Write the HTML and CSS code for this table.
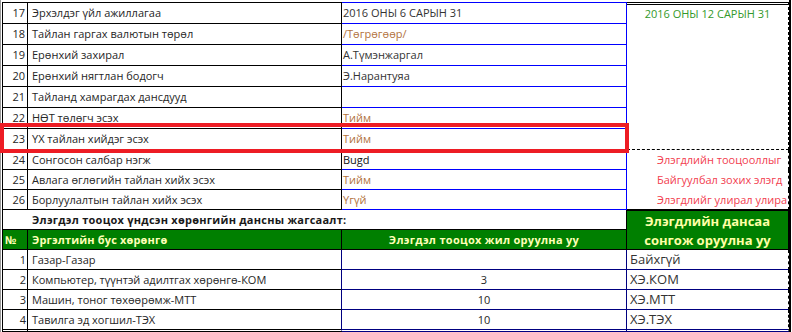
FILE: index.html
```html
<!DOCTYPE html>
<html lang="mn">
<head>
<meta charset="utf-8">
<title>Sheet</title>
<link rel="stylesheet" href="styles.css">
</head>
<body>
<div class="sheet">
  <div class="upper">
    <div class="merged">2016 ОНЫ 12 САРЫН 31</div>

    <div class="c num first">17</div>
    <div class="c lbl first">Эрхэлдэг үйл ажиллагаа</div>
    <div class="c val first">2016 ОНЫ 6 САРЫН 31</div>

    <div class="c num">18</div>
    <div class="c lbl">Тайлан гаргах валютын төрөл</div>
    <div class="c val brown">/Төгрөгөөр/</div>

    <div class="c num">19</div>
    <div class="c lbl">Ерөнхий захирал</div>
    <div class="c val">А.Түмэнжаргал</div>

    <div class="c num">20</div>
    <div class="c lbl">Ерөнхий нягтлан бодогч</div>
    <div class="c val">Э.Нарантуяа</div>

    <div class="c num">21</div>
    <div class="c lbl">Тайланд хамрагдах дансдууд</div>
    <div class="c val"></div>

    <div class="c num">22</div>
    <div class="c lbl">НӨТ төлөгч эсэх</div>
    <div class="c val brown">Тийм</div>

    <div class="c num">23</div>
    <div class="c lbl">ҮХ тайлан хийдэг эсэх</div>
    <div class="c val brown">Тийм</div>

    <div class="c num s">24</div>
    <div class="c lbl s">Сонгосон салбар нэгж</div>
    <div class="c val s black">Bugd</div>
    <div class="c note s">Элэгдлийн тооцооллыг</div>

    <div class="c num s">25</div>
    <div class="c lbl s">Авлага өглөгийн тайлан хийх эсэх</div>
    <div class="c val s brown">Тийм</div>
    <div class="c note s">Байгуулбал зохих элэгд</div>

    <div class="c num s">26</div>
    <div class="c lbl s">Борлуулалтын тайлан хийх эсэх</div>
    <div class="c val s brown">Үгүй</div>
    <div class="c note s last">Элэгдлийг улирал улира</div>
  </div>

  <div class="lower">
    <div class="title">Элэгдэл тооцох үндсэн хөрөнгийн дансны жагсаалт:</div>
    <div class="rhead">Элэгдлийн дансаа<br>сонгож оруулна уу</div>

    <div class="h hnum">№</div>
    <div class="h hlbl">Эргэлтийн бус хөрөнгө</div>
    <div class="h hyr">Элэгдэл тооцох жил оруулна уу</div>

    <div class="d dnum">1</div>
    <div class="d dlbl">Газар-Газар</div>
    <div class="d dyr"></div>
    <div class="d dacc">Байхгүй</div>

    <div class="d dnum">2</div>
    <div class="d dlbl">Компьютер, түүнтэй адилтгах хөрөнгө-КОМ</div>
    <div class="d dyr">3</div>
    <div class="d dacc">ХЭ.КОМ</div>

    <div class="d dnum">3</div>
    <div class="d dlbl">Машин, тоног төхөөрөмж-МТТ</div>
    <div class="d dyr">10</div>
    <div class="d dacc">ХЭ.МТТ</div>

    <div class="d dnum end">4</div>
    <div class="d dlbl end">Тавилга эд хогшил-ТЭХ</div>
    <div class="d dyr end">10</div>
    <div class="d dacc end">ХЭ.ТЭХ</div>
  </div>

  <div class="highlight"></div>
</div>
</body>
</html>
```

FILE: styles.css
```css
* { box-sizing: border-box; }

html, body {
  margin: 0;
  padding: 0;
  background: #fff;
}

body {
  font-family: "Open Sans", "Noto Sans", sans-serif;
  font-size: 11px;
  color: #262626;
}

.sheet {
  position: relative;
  width: 791px;
  height: 332px;
  padding: 2px 0 0 1px;
  border-left: 1px solid #9a9a9a;
  border-right: 2px solid #000;
}

.upper,
.lower {
  display: grid;
  grid-template-columns: 25px 314px 285px 162px;
  border-left: 1px solid #000;
}

.upper {
  grid-template-rows: 22px repeat(6, 21px) repeat(3, 20px);
}

.lower {
  grid-template-rows: 20px 20px 20px 20px 20px 22px;
}

.c {
  white-space: nowrap;
  overflow: hidden;
  line-height: 20px;
}

.c.s { line-height: 19px; }

.num {
  text-align: right;
  padding-right: 2px;
  border-right: 1px solid #000;
  border-bottom: 1px solid #000;
}

.lbl {
  padding-left: 4px;
  border-right: 1px solid #000;
  border-bottom: 1px solid #000;
}

.val {
  padding-left: 1px;
  border-right: 1px solid #0000ff;
  border-bottom: 1px solid #0000ff;
  color: #333;
}

.first { border-top: 1px solid #000; }
.val.first { border-top-color: #0000ff; }

.brown { color: #b27240; }
.black { color: #111; }

.merged {
  grid-column: 4;
  grid-row: 1 / 8;
  border-top: 3px double #000;
  border-right: 1px dashed #000;
  border-bottom: 1px dashed #000;
  text-align: center;
  line-height: 18px;
  color: #33992a;
}

.note {
  padding-left: 30px;
  border-right: 1px dashed #000;
  color: #f2404f;
}

.note.last { border-bottom: 1px solid #000; }

.title {
  grid-column: 1 / 4;
  padding-left: 29px;
  font-weight: 700;
  letter-spacing: 0.25px;
  line-height: 19px;
  color: #1a1a1a;
  border-right: 1px solid #000;
  border-bottom: 1px solid #000;
  white-space: nowrap;
}

.rhead {
  grid-column: 4;
  grid-row: 1 / 3;
  background: #007f00;
  color: #ffffa6;
  font-weight: 700;
  font-size: 13px;
  line-height: 19px;
  text-align: center;
  border-top: 1px solid #000;
  border-right: 1px solid #000;
  border-bottom: 1px solid #000;
  padding-top: 1px;
}

.h {
  background: #007f00;
  color: #ffffb8;
  font-weight: 700;
  line-height: 19px;
  border-right: 1px solid #000;
  border-bottom: 1px solid #000;
  white-space: nowrap;
}

.hnum { padding-left: 2px; }
.hlbl { padding-left: 4px; letter-spacing: 0.15px; }
.hyr { text-align: center; letter-spacing: 0.3px; }

.d {
  line-height: 19px;
  white-space: nowrap;
  overflow: hidden;
}

.dnum {
  text-align: right;
  padding-right: 1px;
  border-right: 1px solid #000;
  border-bottom: 1px solid #000;
}

.dlbl {
  padding-left: 4px;
  border-right: 1px solid #000080;
  border-bottom: 1px solid #000;
}

.dyr {
  text-align: center;
  border-right: 1px solid #000080;
  border-bottom: 1px solid #000080;
}

.dacc {
  padding-left: 3px;
  font-size: 13px;
  color: #333;
  border-right: 1px dashed #000;
  border-bottom: 1px solid #000080;
}

.dnum.end,
.dlbl.end { border-bottom: 3px double #000; }

.dyr.end,
.dacc.end { border-bottom: 3px double #000080; }

.highlight {
  position: absolute;
  left: -1px;
  top: 123px;
  width: 629px;
  height: 30px;
  border: 4px solid #ed1c24;
}
```
